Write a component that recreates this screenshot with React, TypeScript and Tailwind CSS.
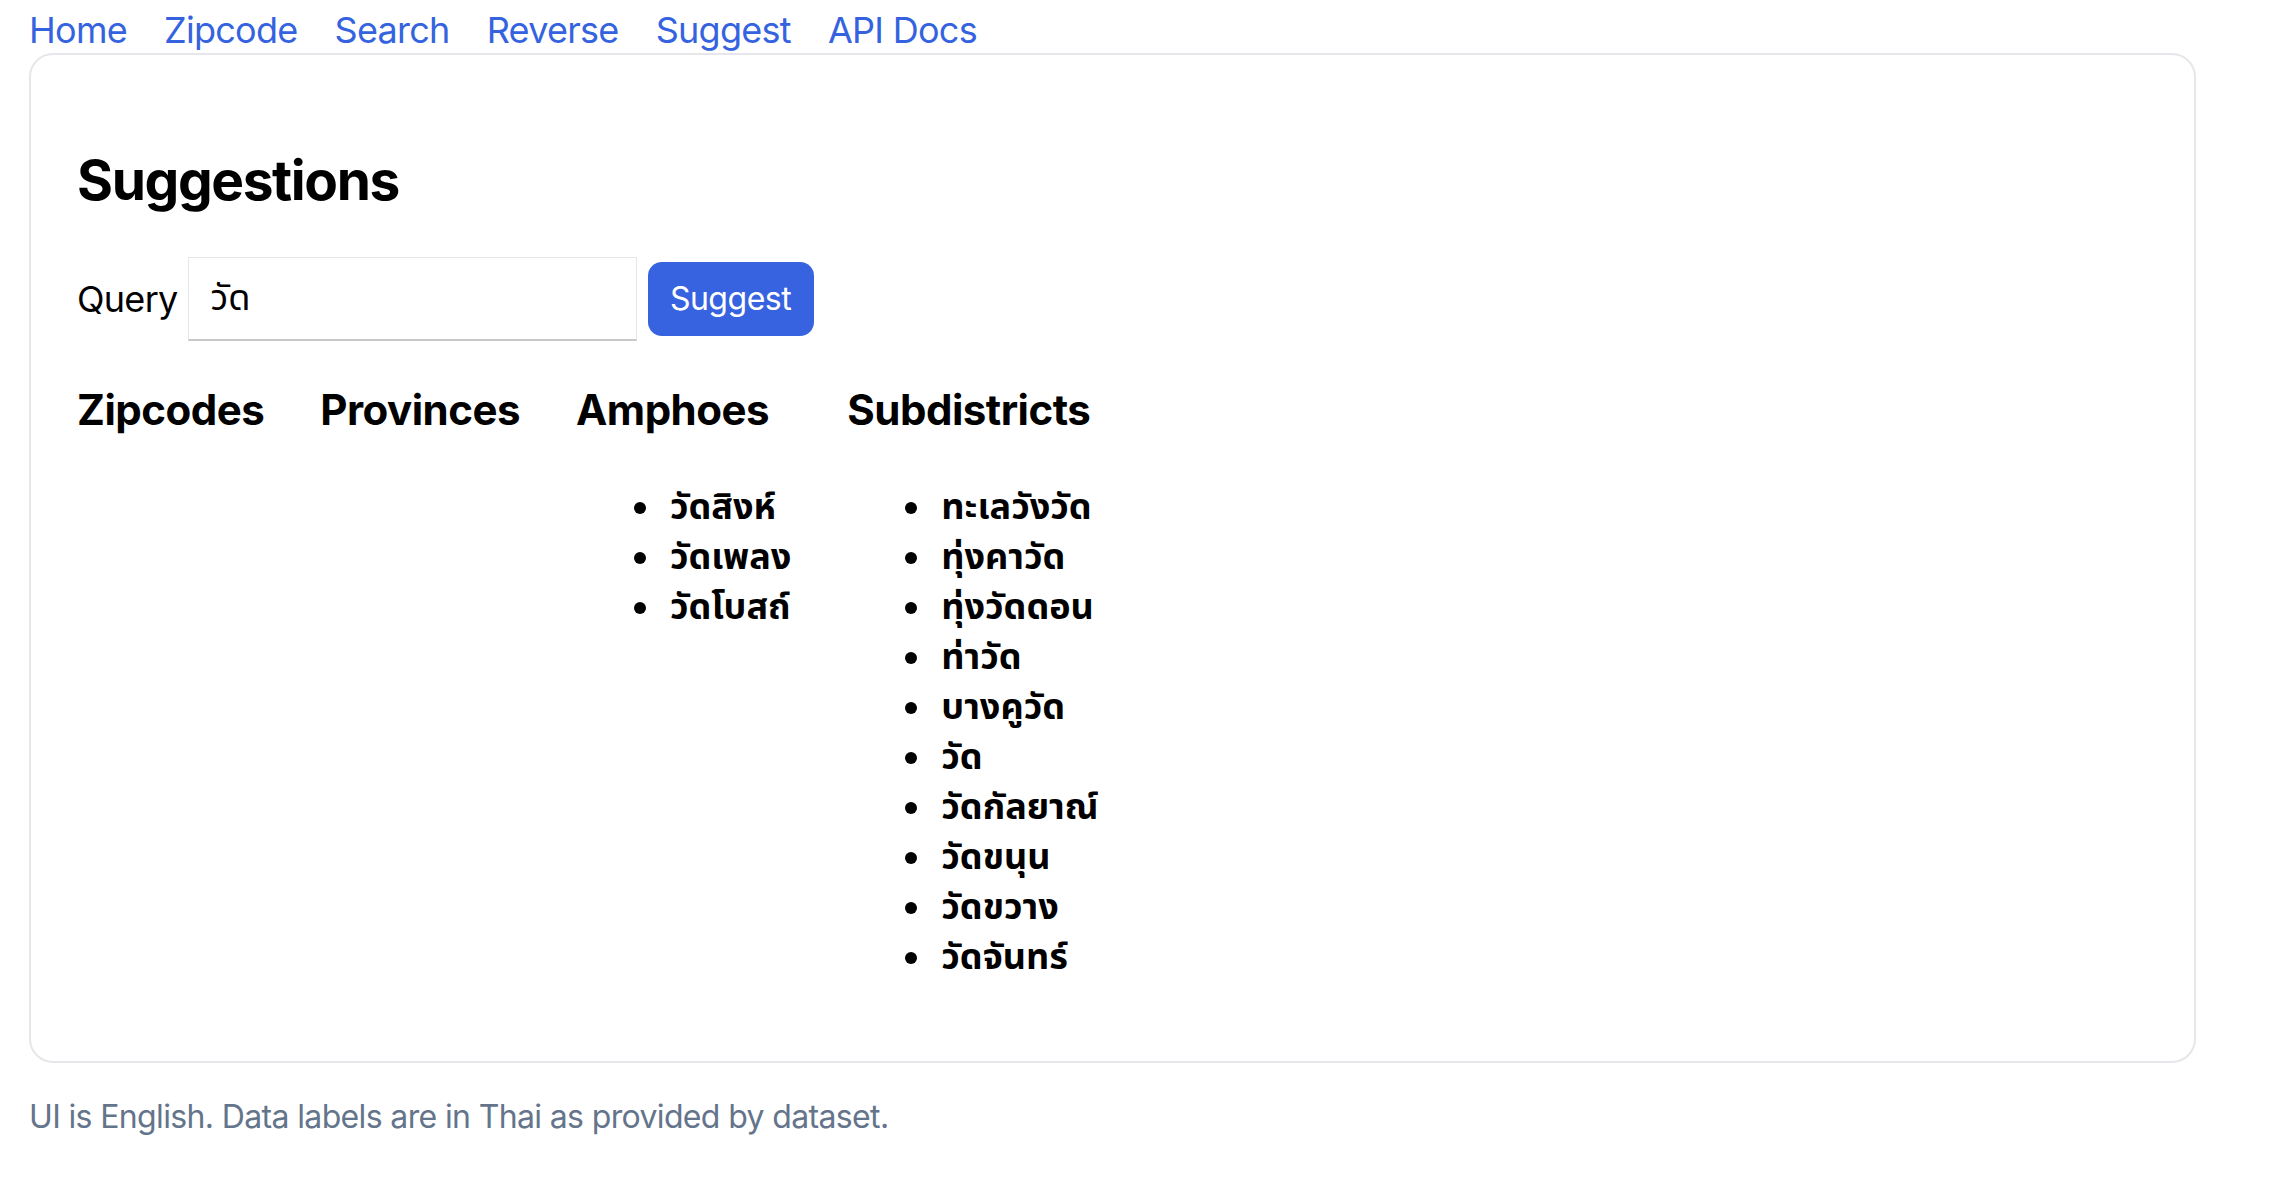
import React from 'react'

const links = ['Home', 'Zipcode', 'Search', 'Reverse', 'Suggest', 'API Docs']

const columns: { title: string; items: string[] }[] = [
  { title: 'Zipcodes', items: [] },
  { title: 'Provinces', items: [] },
  { title: 'Amphoes', items: ['วัดสิงห์', 'วัดเพลง', 'วัดโบสถ์'] },
  {
    title: 'Subdistricts',
    items: ['ทะเลวังวัด', 'ทุ่งคาวัด', 'ทุ่งวัดดอน', 'ท่าวัด', 'บางคูวัด', 'วัด', 'วัดกัลยาณ์', 'วัดขนุน', 'วัดขวาง', 'วัดจันทร์'],
  },
]

const font = { fontFamily: 'Inter, "Noto Sans Thai", "Noto Sans", "Noto Sans CJK SC", sans-serif' }

export default function App() {
  return (
    <div className="min-h-screen bg-white px-[29px] text-black" style={font}>
      <nav className="flex gap-[37px] pt-[7px] text-[36px] leading-[46px] tracking-[-0.02em]">
        {links.map((l) => (
          <a key={l} href="#" className="text-[#3563e0]">
            {l}
          </a>
        ))}
      </nav>
      <div className="w-[2167px] rounded-[24px] border-2 border-[#e6e6eb] px-[46px] pt-[92px] pb-[80px]">
        <h2 className="text-[55px] font-bold leading-[66px] tracking-[-0.025em]">Suggestions</h2>
        <div className="mt-[44px] flex items-center">
          <label className="mr-[10px] text-[36px] tracking-[-0.02em]">Query</label>
          <input
            className="h-[84px] w-[449px] border border-[#e6e6e6] border-b-2 border-b-[#c8c8c8] px-[22px] text-[36px] outline-none"
            defaultValue="วัด"
          />
          <button className="ml-[11px] h-[74px] w-[166px] rounded-[14px] bg-[#3763e0] text-[32px] tracking-[-0.015em] text-white">
            Suggest
          </button>
        </div>
        <div className="mt-[44px] flex gap-[56px]">
          {columns.map((c) => (
            <div key={c.title}>
              <h3 className="text-[42px] font-bold leading-[50px] tracking-[-0.012em]">{c.title}</h3>
              <ul className="mt-[46px] list-disc pl-[88px] text-[36px] font-bold leading-[50px]">
                {c.items.map((it) => (
                  <li key={it} className="pl-[6px]">{it}</li>
                ))}
              </ul>
            </div>
          ))}
        </div>
      </div>
      <p className="mt-[34px] text-[32px] leading-[40px] tracking-[-0.02em] text-[#64748b]">
        UI is English. Data labels are in Thai as provided by dataset.
      </p>
    </div>
  )
}
